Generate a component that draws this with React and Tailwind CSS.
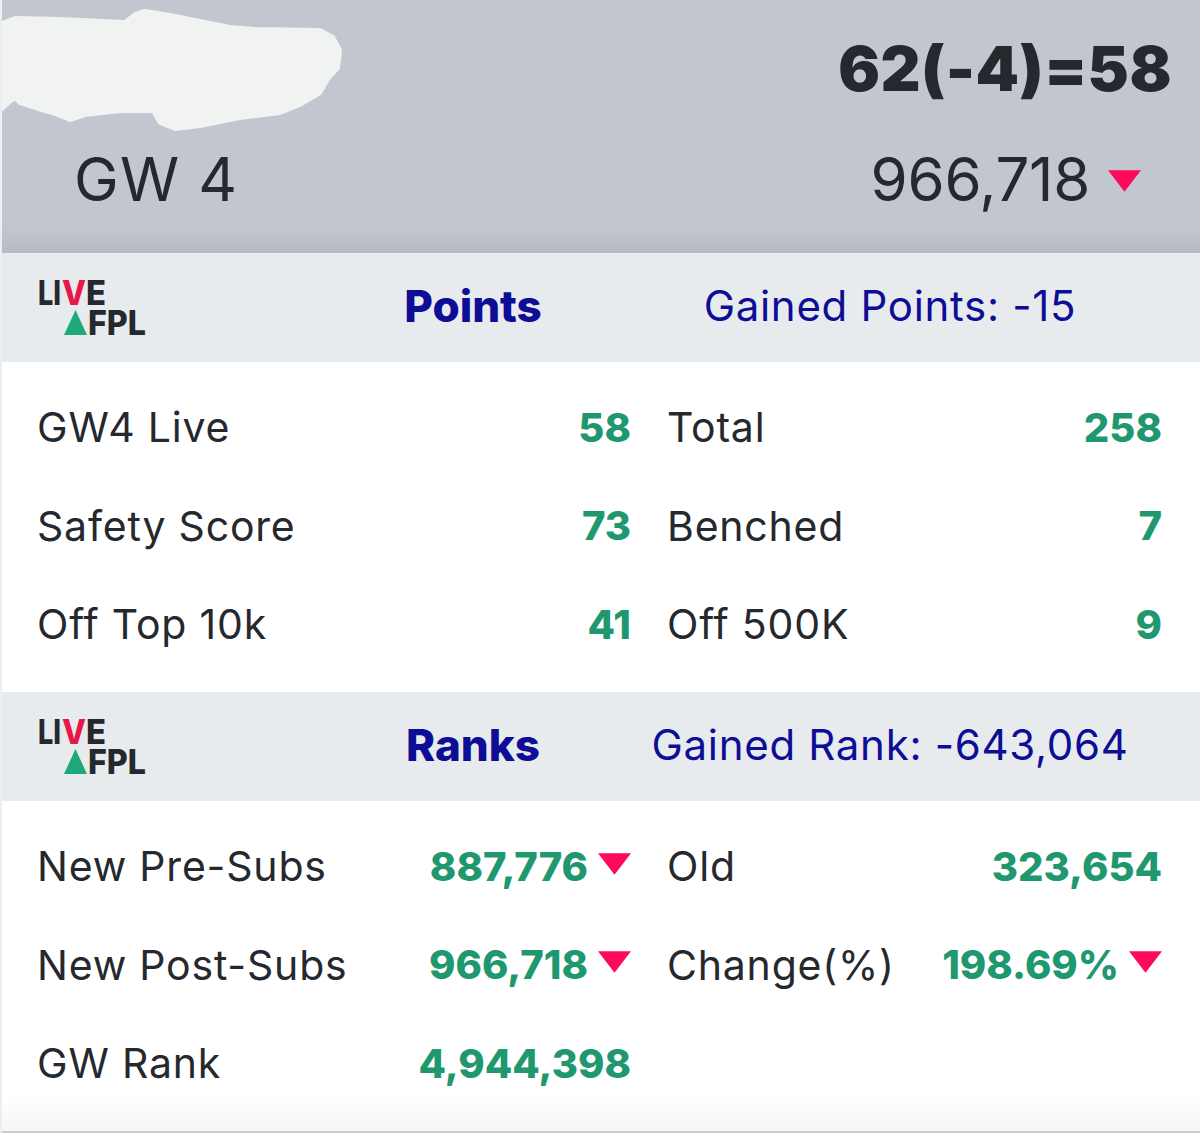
const font = { fontFamily: 'Inter, "Noto Sans", sans-serif' };

const pointsRows = [
  { left: ['GW4 Live', '58'], right: ['Total', '258'] },
  { left: ['Safety Score', '73'], right: ['Benched', '7'] },
  { left: ['Off Top 10k', '41'], right: ['Off 500K', '9'] },
];

const rankRows = [
  { left: ['New Pre-Subs', '887,776', true], right: ['Old', '323,654'] },
  { left: ['New Post-Subs', '966,718', true], right: ['Change(%)', '198.69%', true] },
  { left: ['GW Rank', '4,944,398'] },
];

const DownArrow = ({ className = '' }) => (
  <svg className={className} viewBox="0 0 34 22" fill="#ff0a5a">
    <path d="M0 0H34L17 22Z" />
  </svg>
);

const Logo = () => (
  <svg className="w-[110px] h-[62px] shrink-0 overflow-visible" viewBox="0 0 110 62">
    <g fontFamily="Inter, sans-serif" fontWeight="800" fontSize="34" fill="#25282d">
      <text x="0" y="28" textLength="23" lengthAdjust="spacingAndGlyphs">LI</text>
      <text x="24" y="28" fill="#e8174a" textLength="24" lengthAdjust="spacingAndGlyphs">V</text>
      <text x="48" y="28" textLength="20" lengthAdjust="spacingAndGlyphs">E</text>
      <text x="50" y="58" textLength="58" lengthAdjust="spacingAndGlyphs">FPL</text>
    </g>
    <polygon points="26,58 49,58 37.5,33" fill="#1fa87a" />
  </svg>
);

const Cell = ({ label, value, arrow }) => (
  <div className="flex items-center justify-between">
    <span className="text-[41px] tracking-[0.8px] text-[#25282d] whitespace-nowrap">{label}</span>
    <span className="flex items-center">
      <span className="text-[40px] font-extrabold text-[#1f9870] whitespace-nowrap">{value}</span>
      {arrow && <DownArrow className="w-[33px] h-[22px] ml-[10px] mb-[6px]" />}
    </span>
  </div>
);

const StatGrid = ({ rows, className }) => (
  <div className={`bg-white pl-[35px] ${className}`}>
    {rows.map((row) => (
      <div key={row.left[0]} className="grid grid-cols-[594px_495px] gap-x-[36px] h-[98.3px]">
        <Cell label={row.left[0]} value={row.left[1]} arrow={row.left[2]} />
        {row.right ? <Cell label={row.right[0]} value={row.right[1]} arrow={row.right[2]} /> : <div />}
      </div>
    ))}
  </div>
);

const SectionHeader = ({ title, gainText }) => (
  <div className="h-[109px] bg-[#e8ebee] pl-[36px] flex items-center">
    <Logo />
    <span className="ml-[255px] -mt-[4px] w-[140px] text-center text-[44px] font-extrabold text-[#0d0d96]">{title}</span>
    <span className="ml-[97px] -mt-[4px] w-[500px] text-center text-[42px] tracking-[0.7px] text-[#0d0d96] whitespace-nowrap">{gainText}</span>
  </div>
);

export default function App() {
  return (
    <div className="w-[1200px] h-[1133px] overflow-hidden bg-white border-l-2 border-[#eceef0] box-border" style={font}>
      {/* top summary band */}
      <div className="relative h-[253px] bg-gradient-to-b from-[#c2c7cf] from-90% to-[#b6bbc2] pl-[72px] pr-[28px] flex flex-col justify-between pt-[34px] pb-[39px]">
        {/* scribbled out team name */}
        <svg className="absolute -left-[2px] top-0 w-[345px] h-[135px]" viewBox="0 0 345 135" fill="#f1f2f2" stroke="#f1f2f2" strokeWidth="4" strokeLinejoin="round">
          <path d="M0 24L15 18L60 19L125 22L135 14L145 11L170 15L230 27L255 29L320 30L333 37L340 50L338 68L328 79L320 93L300 105L280 113L240 118L200 126L175 129L160 123L153 111L120 111L85 115L70 120L55 114L20 103L15 98L5 106L0 111Z" />
        </svg>
        <div className="text-right text-[62px] leading-[70px] font-black text-[#25282d] tracking-[0.5px]">62(-4)=58</div>
        <div className="flex items-center justify-between">
          <span className="text-[60px] leading-[70px] text-[#25282d] tracking-[1.2px]">GW 4</span>
          <span className="flex items-center">
            <span className="text-[60px] leading-[70px] text-[#25282d] tracking-[-0.3px]">966,718</span>
            <DownArrow className="w-[33px] h-[22px] ml-[18px] mr-[31px] mt-[4px]" />
          </span>
        </div>
      </div>

      <SectionHeader title="Points" gainText="Gained Points: -15" />
      <StatGrid rows={pointsRows} className="pt-[17px] h-[330px]" />

      <SectionHeader title="Ranks" gainText="Gained Rank: -643,064" />
      <StatGrid rows={rankRows} className="pt-[17px] h-[332px] bg-gradient-to-b from-white from-90% to-[#f6f6f5] border-b-2 border-[#c8ccd2]" />
    </div>
  );
}
